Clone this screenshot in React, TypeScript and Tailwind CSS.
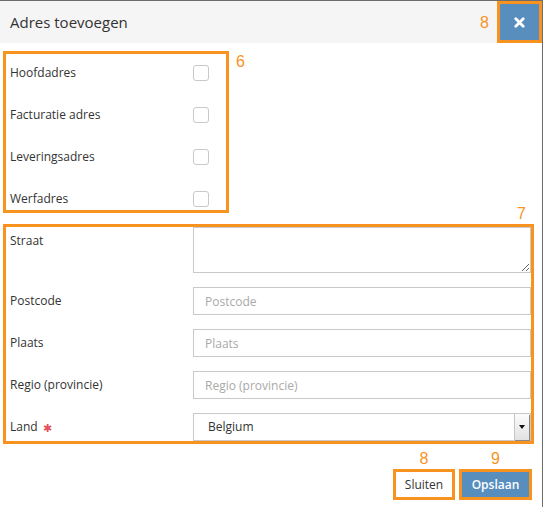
import React from 'react'

const checks = ['Hoofdadres', 'Facturatie adres', 'Leveringsadres', 'Werfadres']

const fields = [
  { label: 'Postcode', placeholder: 'Postcode' },
  { label: 'Plaats', placeholder: 'Plaats' },
  { label: 'Regio (provincie)', placeholder: 'Regio (provincie)' },
]

function Num({ children }: { children: React.ReactNode }) {
  return (
    <span className="block font-['Liberation_Sans',sans-serif] text-[16px] leading-[16px] text-[#f7931e]">
      {children}
    </span>
  )
}

export default function App() {
  return (
    <div className="w-[543px] h-[507px] bg-white border-t border-r border-[#6d6d6d] font-['Open_Sans',sans-serif] text-[#333]">
      {/* header */}
      <div className="flex items-center h-[42px] bg-[#f5f5f5]">
        <h2 className="flex-1 pl-[10px] text-[15px] text-[#333]">Adres toevoegen</h2>
        <span className="mt-[2px]">
          <Num>8</Num>
        </span>
        <button className="ml-[8px] w-[45px] h-[42px] flex items-center justify-center bg-[#578ebe] border-[3px] border-[#f7931e]">
          <svg width="11" height="11" viewBox="0 0 11 11">
            <path d="M1.8 1.8 L9.2 9.2 M9.2 1.8 L1.8 9.2" stroke="white" strokeWidth="2.8" strokeLinecap="round" />
          </svg>
        </button>
      </div>

      {/* checkboxes */}
      <div className="flex items-start mt-[8px] ml-[3px]">
        <div className="w-[226px] border-[3px] border-[#f7931e] pt-[9px] pb-[1px] pl-[4px] flex flex-col gap-[22px]">
          {checks.map((c) => (
            <div key={c} className="flex items-center h-[20px] text-[12px]">
              <span className="w-[183px]">{c}</span>
              <span className="w-[16px] h-[16px] rounded-[3px] border border-[#c9c9c9] bg-white" />
            </div>
          ))}
        </div>
        <span className="ml-[7px] mt-[3px]">
          <Num>6</Num>
        </span>
      </div>

      {/* address fields */}
      <div className="relative mt-[11px] ml-[3px] w-[531px] border-[3px] border-[#f7931e] pl-[4px] flex flex-col gap-[14px]">
        <span className="absolute right-[5px] -top-[21px]">
          <Num>7</Num>
        </span>
        <div className="flex items-start text-[12px]">
          <span className="w-[183px] pt-[5px] leading-[18px]">Straat</span>
          <textarea className="flex-1 h-[46px] border border-[#c9c9c9] outline-none resize" />
        </div>
        {fields.map((f) => (
          <div key={f.label} className="flex items-center text-[12px]">
            <span className="w-[183px]">{f.label}</span>
            <input
              placeholder={f.placeholder}
              className="flex-1 h-[28px] border border-[#c9c9c9] pl-[11px] text-[12px] placeholder:text-[#a9a9a9] outline-none"
            />
          </div>
        ))}
        <div className="flex items-center text-[12px]">
          <span className="w-[183px] flex items-center">
            Land
            <span className="ml-[5px] text-[#e7505a] text-[11px] leading-none">✱</span>
          </span>
          <div className="flex-1 h-[28px] border border-[#c9c9c9] flex items-center justify-between">
            <span className="pl-[14px] text-[12px] text-[#333]">Belgium</span>
            <span className="w-[15px] h-[26px] mr-[1px] flex items-center justify-center border-l border-[#c5c5c5] bg-gradient-to-b from-[#fcfcfc] to-[#e2e2e2] shadow-[1px_1px_0_#888]">
              <svg width="6" height="4" viewBox="0 0 6 4">
                <path d="M0 0 L6 0 L3 4 Z" fill="#111" />
              </svg>
            </span>
          </div>
        </div>
      </div>

      {/* footer buttons */}
      <div className="flex justify-end gap-[4px] mt-[7px] pr-[10px]">
        <div className="flex flex-col items-center gap-[2px]">
          <Num>8</Num>
          <button className="w-[62px] h-[31px] border-[3px] border-[#f7931e] bg-white text-[12px] text-[#333]">
            Sluiten
          </button>
        </div>
        <div className="flex flex-col items-center gap-[2px]">
          <Num>9</Num>
          <button className="w-[73px] h-[31px] border-[3px] border-[#f7931e] bg-[#578ebe] text-[12px] font-semibold text-white">
            Opslaan
          </button>
        </div>
      </div>
    </div>
  )
}
